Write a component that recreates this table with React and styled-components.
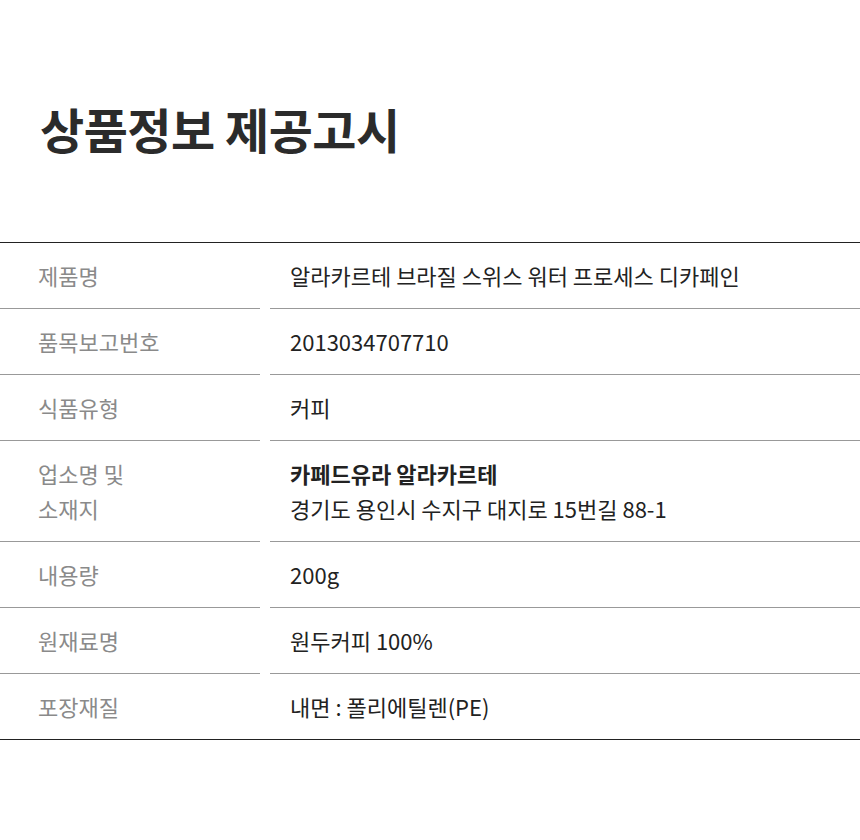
import React from 'react';
import styled, { createGlobalStyle } from 'styled-components';

const GlobalStyle = createGlobalStyle`
  body {
    margin: 0;
    background: #fff;
    font-family: "Noto Sans CJK KR", "Noto Sans", sans-serif;
  }
`;

const Page = styled.div`
  width: 860px;
  padding-top: 92px;
`;

const Title = styled.h2`
  margin: 0 0 0 40px;
  font-size: 48px;
  line-height: 72px;
  font-weight: 700;
  color: #2b2b2b;
  letter-spacing: -0.5px;
`;

const Table = styled.div`
  margin-top: 78px;
  border-top: 1px solid #222;
  border-bottom: 1px solid #222;
`;

const Row = styled.div`
  display: grid;
  grid-template-columns: 260px 590px;
  column-gap: 10px;
`;

const Cell = styled.div`
  padding: 15px 0;
  font-size: 22px;
  line-height: 35px;
  border-bottom: ${p => (p.$last ? 'none' : '1px solid #999')};
`;

const Label = styled(Cell)`
  padding-left: 38px;
  color: #8a8a8a;
`;

const Value = styled(Cell)`
  padding-left: 20px;
  color: #222;
`;

const Strong = styled.div`
  font-weight: 700;
`;

const rows = [
  { label: '제품명', value: '알라카르테 브라질 스위스 워터 프로세스 디카페인' },
  { label: '품목보고번호', value: '2013034707710' },
  { label: '식품유형', value: '커피' },
  {
    label: ['업소명 및', '소재지'],
    value: [<Strong key="a">카페드유라 알라카르테</Strong>, <div key="b">경기도 용인시 수지구 대지로 15번길 88-1</div>],
  },
  { label: '내용량', value: '200g' },
  { label: '원재료명', value: '원두커피 100%' },
  { label: '포장재질', value: '내면 : 폴리에틸렌(PE)' },
];

export default function App() {
  return (
    <Page>
      <GlobalStyle />
      <Title>상품정보 제공고시</Title>
      <Table>
        {rows.map((row, i) => {
          const last = i === rows.length - 1;
          return (
            <Row key={i}>
              <Label $last={last}>
                {Array.isArray(row.label) ? row.label.map(l => <div key={l}>{l}</div>) : row.label}
              </Label>
              <Value $last={last}>{row.value}</Value>
            </Row>
          );
        })}
      </Table>
    </Page>
  );
}
